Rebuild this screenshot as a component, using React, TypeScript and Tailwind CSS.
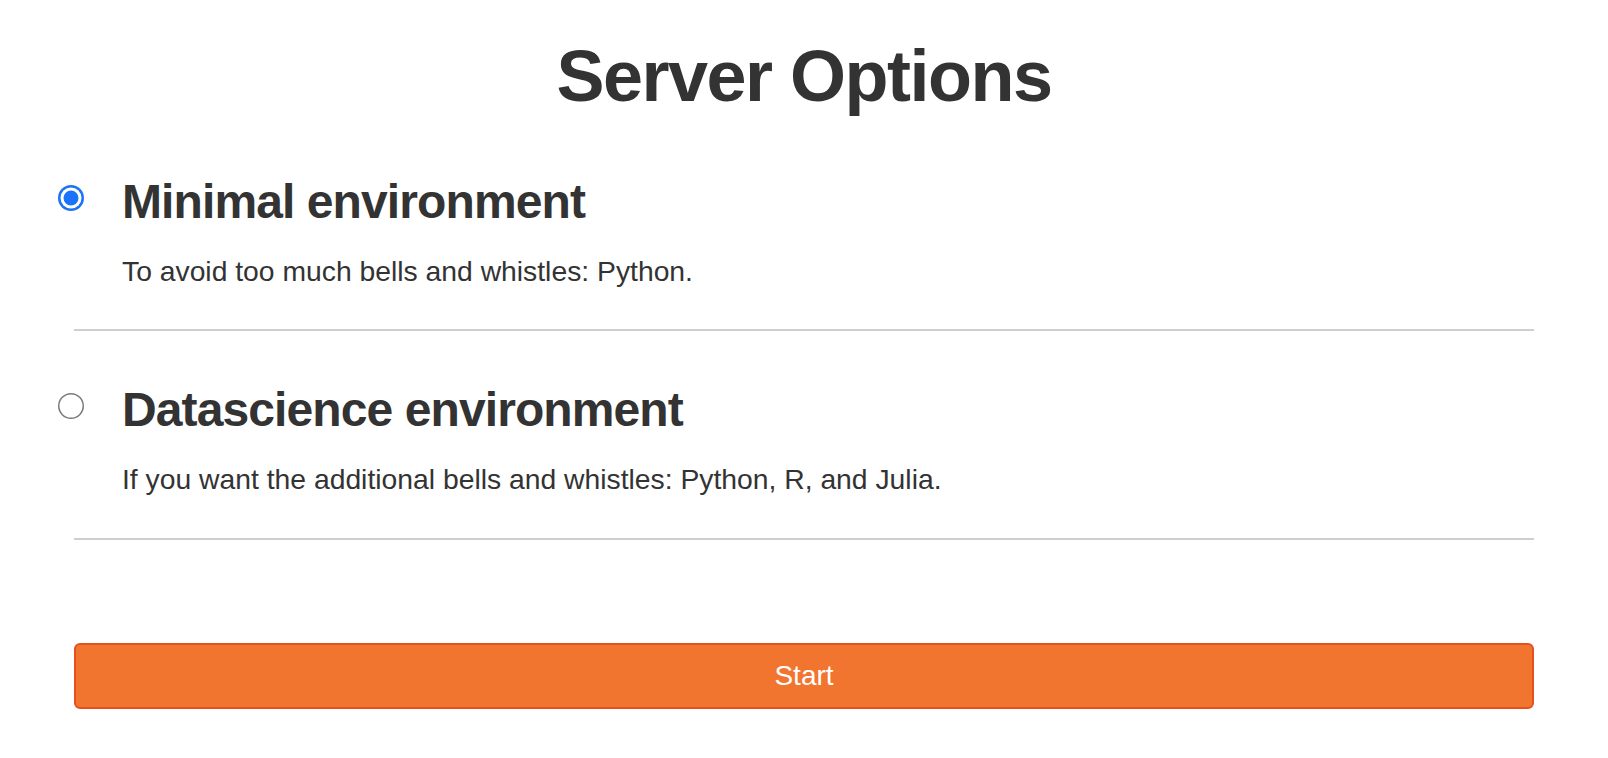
import React, { useState } from 'react';

const options = [
  {
    id: 'minimal',
    title: 'Minimal environment',
    description: 'To avoid too much bells and whistles: Python.',
  },
  {
    id: 'datascience',
    title: 'Datascience environment',
    description: 'If you want the additional bells and whistles: Python, R, and Julia.',
  },
];

const Radio = ({ checked }: { checked: boolean }) =>
  checked ? (
    <svg width="26" height="26" viewBox="0 0 26 26" className="shrink-0 mt-[7px]">
      <circle cx="13" cy="13" r="13" fill="#1a73f8" />
      <circle cx="13" cy="13" r="10.5" fill="#ffffff" />
      <circle cx="13" cy="13" r="7.5" fill="#1a73f8" />
    </svg>
  ) : (
    <svg width="26" height="26" viewBox="0 0 26 26" className="shrink-0 mt-[7px]">
      <circle cx="13" cy="13" r="12.25" fill="#ffffff" stroke="#7a7a7a" strokeWidth="1.5" />
    </svg>
  );

export default function App() {
  const [selected, setSelected] = useState('minimal');

  return (
    <div className="min-h-[758px] bg-white text-[#333333] font-['Liberation_Sans',Arial,sans-serif] px-[74px] pt-[40px]">
      <h1 className="text-center text-[72px] leading-none font-bold tracking-[-1.5px]">Server Options</h1>

      <div className="mt-[66px]">
        {options.map((opt, i) => (
          <div key={opt.id} className={i > 0 ? 'mt-[55px]' : ''}>
            <label className="flex items-start gap-[38px] -ml-[16px] cursor-pointer" onClick={() => setSelected(opt.id)}>
              <Radio checked={selected === opt.id} />
              <div className="flex flex-col">
                <h3 className="text-[48px] leading-none font-bold tracking-[-0.9px]">{opt.title}</h3>
                <p className="mt-[31px] text-[28.3px] leading-none">{opt.description}</p>
              </div>
            </label>
            <div className="mt-[44px] h-[2px] bg-[#cfcfcf]" />
          </div>
        ))}
      </div>

      <button
        type="button"
        className="mt-[103px] w-full h-[66px] rounded-[6px] border-2 border-[#e4501e] bg-[#f1752e] text-white text-[28px] leading-none flex items-center justify-center"
      >
        Start
      </button>
    </div>
  );
}
